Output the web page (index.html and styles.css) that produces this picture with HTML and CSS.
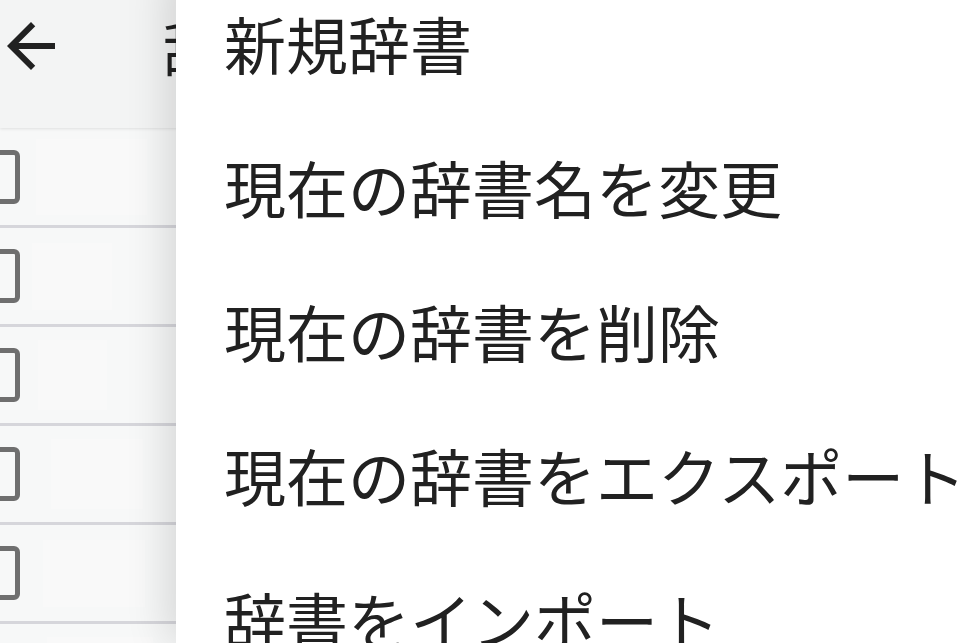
FILE: index.html
```html
<!DOCTYPE html>
<html lang="ja">

<head>
  <meta charset="UTF-8">
  <meta name="viewport" content="width=device-width, initial-scale=1.0">
  <title>辞書メニュー</title>
  <link rel="stylesheet" href="styles.css">
</head>

<body>
  <div id="screen">
    <div id="app">
      <div class="toolbar">
        <svg class="back" viewBox="4 4 16 16" aria-hidden="true">
          <path d="M20 11H7.83l5.59-5.59L12 4l-8 8 8 8 1.41-1.41L7.83 13H20v-2z" />
        </svg>
        <div class="title">辞書一覧</div>
      </div>
      <div class="list">
        <div class="row"><span class="check"></span><span class="field"></span></div>
        <div class="row"><span class="check"></span><span class="field"></span></div>
        <div class="row"><span class="check"></span><span class="field"></span></div>
        <div class="row"><span class="check"></span><span class="field"></span></div>
        <div class="row"><span class="check"></span><span class="field"></span></div>
        <div class="row"><span class="check"></span><span class="field"></span></div>
      </div>
    </div>

    <div id="menu">
      <div class="item">新規辞書</div>
      <div class="item">現在の辞書名を変更</div>
      <div class="item">現在の辞書を削除</div>
      <div class="item">現在の辞書をエクスポート</div>
      <div class="item">辞書をインポート</div>
    </div>
  </div>
</body>

</html>
```

FILE: styles.css
```css
:root {
  --toolbar-bg: #f3f4f4;
  --list-bg: #f7f8f8;
  --field-bg: #f9f9f9;
  --divider: #d6d6db;
  --text: #212121;
  --check: #6f6f6f;
}

body {
  margin: 0;
  width: 972px;
  height: 643px;
  overflow: hidden;
  background-color: white;
  font-family: "Noto Sans CJK JP", "Noto Sans", sans-serif;
  color: var(--text);
}

#screen {
  position: relative;
  width: 972px;
  height: 643px;
  overflow: hidden;
}

#app {
  display: flex;
  flex-direction: column;
  height: 100%;
  background-color: var(--list-bg);
}

.toolbar {
  flex: none;
  display: flex;
  align-items: flex-start;
  height: 128px;
  box-sizing: border-box;
  padding: 22px 0 0 7px;
  background-color: var(--toolbar-bg);
  box-shadow: 0 1px 3px rgba(0, 0, 0, 0.1);
  position: relative;
  z-index: 1;

  .back {
    width: 48px;
    height: 48px;
    fill: var(--text);
    flex: none;
  }

  .title {
    margin-left: 108px;
    margin-top: -14px;
    font-size: 60px;
    line-height: 1.25;
    white-space: nowrap;
  }
}

.list {
  flex: none;
  padding-top: 1px;

  .row {
    display: flex;
    align-items: center;
    height: 96px;
    border-bottom: 3px solid var(--divider);
  }

  .check {
    flex: none;
    width: 44px;
    height: 44px;
    margin-left: -34px;
    border: 5px solid var(--check);
    border-radius: 6px;
  }

  .field {
    height: 70px;
    background-color: var(--field-bg);
  }

  .row:nth-child(1) .field { margin-left: 16px; width: 111px; height: 76px; }
  .row:nth-child(2) .field { margin-left: 12px; width: 80px; height: 67px; }
  .row:nth-child(3) .field { margin-left: 18px; width: 69px; }
  .row:nth-child(4) .field { margin-left: 31px; width: 92px; }
  .row:nth-child(5) .field { margin-left: 23px; width: 102px; height: 67px; }
  .row:nth-child(6) .field { margin-left: 27px; width: 106px; }
}

#menu {
  position: absolute;
  z-index: 2;
  left: 176px;
  top: -29px;
  right: 0;
  bottom: 0;
  background-color: white;
  box-shadow: -8px 0 40px rgba(0, 0, 0, 0.14);

  .item {
    display: flex;
    align-items: center;
    height: 144px;
    padding-left: 48px;
    font-size: 62px;
    line-height: 1;
    white-space: nowrap;
  }
}
```
